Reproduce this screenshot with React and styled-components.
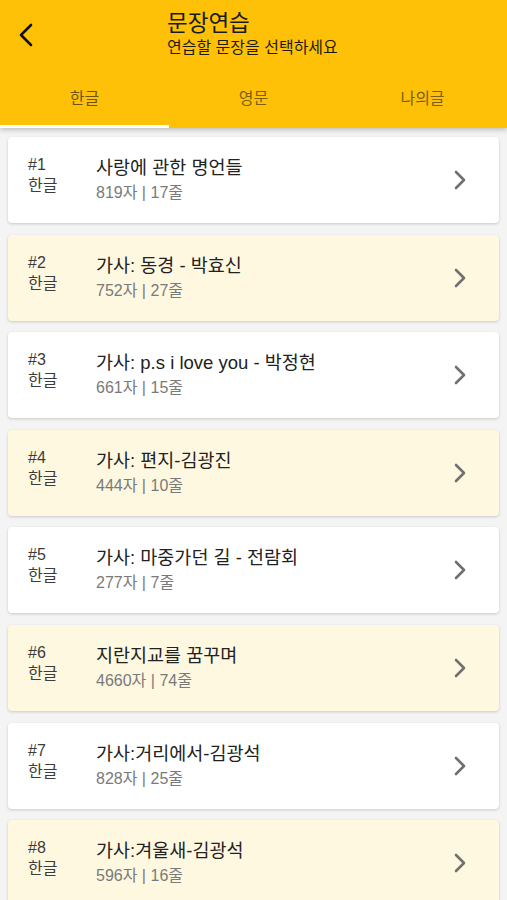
import React from 'react';
import styled, { createGlobalStyle } from 'styled-components';

const GlobalStyle = createGlobalStyle`
  body {
    margin: 0;
    background: #f4f4f4;
    font-family: "Liberation Sans", "Noto Sans CJK KR", sans-serif;
  }
`;

const items = [
    { title: '사랑에 관한 명언들', chars: 819, lines: 17 },
    { title: '가사: 동경 - 박효신', chars: 752, lines: 27 },
    { title: '가사: p.s i love you - 박정현', chars: 661, lines: 15 },
    { title: '가사: 편지-김광진', chars: 444, lines: 10 },
    { title: '가사: 마중가던 길 - 전람회', chars: 277, lines: 7 },
    { title: '지란지교를 꿈꾸며', chars: 4660, lines: 74 },
    { title: '가사:거리에서-김광석', chars: 828, lines: 25 },
    { title: '가사:겨울새-김광석', chars: 596, lines: 16 },
];

const tabs = ['한글', '영문', '나의글'];

const App = () => {
    return (
        <Page>
            <GlobalStyle />
            <Header>
                <TopBar>
                    <BackButton>
                        <svg width="16" height="24" viewBox="0 0 16 24">
                            <path d="M13 2 L3 12 L13 22" fill="none" stroke="#111" strokeWidth="2.6" strokeLinecap="round" strokeLinejoin="round" />
                        </svg>
                    </BackButton>
                    <Titles>
                        <Title>문장연습</Title>
                        <Subtitle>연습할 문장을 선택하세요</Subtitle>
                    </Titles>
                </TopBar>
                <Tabs>
                    {tabs.map((t, i) => (
                        <Tab key={t} active={i === 0}>{t}</Tab>
                    ))}
                </Tabs>
            </Header>
            <List>
                {items.map((item, i) => (
                    <Card key={i} alt={i % 2 === 1}>
                        <Meta>
                            <span>#{i + 1}</span>
                            <span>한글</span>
                        </Meta>
                        <Body>
                            <ItemTitle>{item.title}</ItemTitle>
                            <ItemInfo>{item.chars}자 | {item.lines}줄</ItemInfo>
                        </Body>
                        <Chevron width="14" height="20" viewBox="0 0 14 20">
                            <path d="M3 2 L11 10 L3 18" fill="none" stroke="#707070" strokeWidth="2.6" strokeLinecap="round" strokeLinejoin="round" />
                        </Chevron>
                    </Card>
                ))}
            </List>
        </Page>
    );
};

const Page = styled.div`
    width: 507px;
    min-height: 900px;
    overflow: hidden;
`;

const Header = styled.header`
    background-color: #ffc107;
    height: 128px;
    display: flex;
    flex-direction: column;
    box-shadow: 0 2px 5px rgba(0, 0, 0, 0.22);
    position: relative;
    z-index: 1;
`;

const TopBar = styled.div`
    display: flex;
    align-items: flex-start;
    height: 70px;
`;

const BackButton = styled.div`
    padding: 23px 0 0 18px;
    box-sizing: border-box;
    width: 167px;
`;

const Titles = styled.div`
    display: flex;
    flex-direction: column;
    padding-top: 9px;
`;

const Title = styled.div`
    font-size: 22.5px;
    line-height: 29px;
    color: #1a1a1a;
`;

const Subtitle = styled.div`
    font-size: 16px;
    line-height: 20px;
    color: #1f1a0a;
`;

const Tabs = styled.div`
    display: flex;
    flex: 1;
`;

const Tab = styled.div`
    flex: 1;
    display: flex;
    align-items: center;
    justify-content: center;
    font-size: 16px;
    padding-bottom: 2px;
    color: ${p => (p.active ? '#6e5610' : '#7a6012')};
    border-bottom: 3px solid ${p => (p.active ? '#fff' : 'transparent')};
`;

const List = styled.div`
    display: flex;
    flex-direction: column;
    gap: 11.6px;
    padding: 9px 8px;
`;

const Card = styled.div`
    height: 86px;
    box-sizing: border-box;
    display: flex;
    align-items: flex-start;
    padding: 17px 32px 0 20px;
    border-radius: 4px;
    background-color: ${p => (p.alt ? '#fff8e1' : '#ffffff')};
    box-shadow: 0 1px 3px rgba(0, 0, 0, 0.18);
`;

const Meta = styled.div`
    width: 68px;
    display: flex;
    flex-direction: column;
    font-size: 16px;
    line-height: 21px;
    color: #3c3c3c;
`;

const Body = styled.div`
    flex: 1;
    display: flex;
    flex-direction: column;
    padding-top: 1px;
`;

const ItemTitle = styled.div`
    font-size: 18.5px;
    line-height: 25px;
    color: #222;
`;

const ItemInfo = styled.div`
    font-size: 16px;
    line-height: 22px;
    color: #7a7a7a;
    margin-top: 2px;
`;

const Chevron = styled.svg`
    align-self: center;
    margin-top: -17px;
`;

export default App;
